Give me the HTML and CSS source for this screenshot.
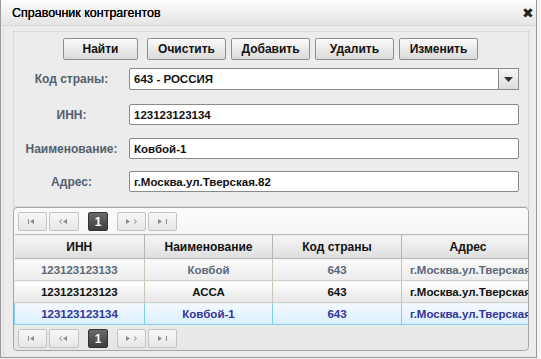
FILE: index.html
```html
<!DOCTYPE html>
<html>
<head>
<meta charset="utf-8">
<link rel="stylesheet" href="styles.css">
</head>
<body>
<div class="dialog">
  <div class="titlebar">
    <span class="title">Справочник контрагентов</span>
    <span class="close">✖</span>
  </div>
  <div class="content">
    <div class="fieldset">
      <div class="buttons">
        <button class="btn w75">Найти</button>
        <button class="btn">Очистить</button>
        <button class="btn">Добавить</button>
        <button class="btn">Удалить</button>
        <button class="btn">Изменить</button>
      </div>
      <div class="row r1">
        <div class="label">Код страны:</div>
        <div class="combo"><span class="combo-text">643 - РОССИЯ</span><span class="combo-btn"><svg width="9" height="5" viewBox="0 0 9 5"><path d="M0 0h9L4.5 5z" fill="#333"/></svg></span></div>
      </div>
      <div class="row r2">
        <div class="label">ИНН:</div>
        <div class="input">123123123134</div>
      </div>
      <div class="row r3">
        <div class="label">Наименование:</div>
        <div class="input">Ковбой-1</div>
      </div>
      <div class="row r4">
        <div class="label">Адрес:</div>
        <div class="input">г.Москва.ул.Тверская.82</div>
      </div>
    </div>
    <div class="grid">
      <div class="pager top">
        <span class="pbtn"><svg width="9" height="5" viewBox="0 0 9 5"><path d="M0 0h1v5H0zM2 2.5L6 0v5z" fill="#8a8a8a"/></svg></span>
        <span class="pbtn w30"><svg width="11" height="5" viewBox="0 0 11 5"><path d="M0 2.5L3 0v1L1.2 2.5 3 4v1zM4 2.5L8 0v5z" fill="#8a8a8a"/></svg></span>
        <span class="pnum">1</span>
        <span class="pbtn"><svg width="11" height="5" viewBox="0 0 11 5"><path d="M0 0l4 2.5L0 5zM8 0l3 2.5L8 5v-1l1.8-1.5L8 1z" fill="#8a8a8a"/></svg></span>
        <span class="pbtn"><svg width="9" height="5" viewBox="0 0 9 5"><path d="M0 0l4 2.5L0 5zM8 0h1v5H8z" fill="#8a8a8a"/></svg></span>
      </div>
      <table class="tbl">
        <colgroup><col class="c1"><col class="c2"><col class="c3"><col class="c4"></colgroup>
        <thead>
          <tr><th>ИНН</th><th>Наименование</th><th>Код страны</th><th>Адрес</th></tr>
        </thead>
        <tbody>
          <tr class="dim"><td>123123123133</td><td>Ковбой</td><td>643</td><td>г.Москва.ул.Тверская.82</td></tr>
          <tr class="norm"><td>123123123123</td><td>АССА</td><td>643</td><td>г.Москва.ул.Тверская.82</td></tr>
          <tr class="sel"><td>123123123134</td><td>Ковбой-1</td><td>643</td><td>г.Москва.ул.Тверская.82</td></tr>
        </tbody>
      </table>
      <div class="pager bottom">
        <span class="pbtn"><svg width="9" height="5" viewBox="0 0 9 5"><path d="M0 0h1v5H0zM2 2.5L6 0v5z" fill="#8a8a8a"/></svg></span>
        <span class="pbtn w30"><svg width="11" height="5" viewBox="0 0 11 5"><path d="M0 2.5L3 0v1L1.2 2.5 3 4v1zM4 2.5L8 0v5z" fill="#8a8a8a"/></svg></span>
        <span class="pnum">1</span>
        <span class="pbtn"><svg width="11" height="5" viewBox="0 0 11 5"><path d="M0 0l4 2.5L0 5zM8 0l3 2.5L8 5v-1l1.8-1.5L8 1z" fill="#8a8a8a"/></svg></span>
        <span class="pbtn"><svg width="9" height="5" viewBox="0 0 9 5"><path d="M0 0l4 2.5L0 5zM8 0h1v5H8z" fill="#8a8a8a"/></svg></span>
      </div>
    </div>
  </div>
</div>
</body>
</html>
```
FILE: styles.css
```css
* { box-sizing: border-box; }
html, body { margin: 0; padding: 0; }
body {
  background: #f4f4f4;
  font-family: "Liberation Sans", Arial, sans-serif;
  width: 541px;
  height: 359px;
  overflow: hidden;
}
.dialog {
  width: 537px;
  height: 358px;
  border: 1px solid #9a9a9a;
  border-top: none;
  background: #ececec;
  display: flex;
  flex-direction: column;
}
.titlebar {
  height: 26px;
  flex: none;
  background: linear-gradient(#fdfdfd, #e4e4e4);
  border-bottom: 1px solid #d6d6d6;
  display: flex;
  align-items: center;
  justify-content: space-between;
  padding: 0 2px 0 11px;
}
.title {
  font-size: 12.5px;
  color: #000;
  text-shadow: 0 0 0.4px #000;
}
.close {
  font-size: 14px;
  color: #222;
  line-height: 1;
}
.content {
  flex: 1;
  padding: 5px 0 0 9px;
  border-left: 1px dotted #d0d0d0;
  margin-left: 2px;
}
.fieldset {
  width: 516px;
  height: 176px;
  border: 1px dotted #c4c4c4;
  padding: 6px 0 0 49px;
}
.buttons {
  display: flex;
  gap: 5px;
}
.btn {
  width: 79px;
  height: 22px;
  border: 1px solid #8e8e8e;
  border-radius: 2px;
  background: linear-gradient(#fafafa, #dadada);
  font-family: "Liberation Sans", Arial, sans-serif;
  font-weight: bold;
  font-size: 12px;
  color: #111;
  padding: 0;
}
.btn.w75 { width: 75px; margin-right: 4px; }
.row {
  display: flex;
  align-items: center;
  margin-left: -49px;
}
.r1 { margin-top: 8px; }
.r2 { margin-top: 14px; }
.r3 { margin-top: 13px; }
.r4 { margin-top: 12px; }
.label {
  width: 115px;
  text-align: center;
  font-weight: bold;
  font-size: 12px;
  color: #52606e;
}
.combo, .input {
  width: 390px;
  height: 22px;
  background: #fff;
  border: 1px solid #8a8a8a;
  border-radius: 2px;
  display: flex;
  align-items: center;
  font-weight: bold;
  font-size: 11.5px;
  color: #111;
  padding-left: 4px;
}
.input { height: 21px; }
.combo-text { flex: 1; }
.combo-btn {
  width: 21px;
  height: 22px;
  margin-right: -1px;
  border: 1px solid #8a8a8a;
  background: linear-gradient(#f6f6f6, #dcdcdc);
  display: flex;
  align-items: center;
  justify-content: center;
}
.grid {
  width: 516px;
  height: 144px;
  border: 1px solid #a6a6a6;
  border-radius: 4px;
  overflow: hidden;
  background: linear-gradient(#fbfbfb, #e6e6e6);
}
.pager {
  height: 26px;
  display: flex;
  align-items: flex-start;
  padding: 4px 0 0 4px;
  gap: 2px;
}
.pager.bottom { height: 27px; padding-top: 4px; }
.pbtn {
  width: 29px;
  height: 19px;
  border: 1px solid #c2c2c2;
  border-radius: 2px;
  background: linear-gradient(#f8f8f8, #e6e6e6);
  display: flex;
  align-items: center;
  justify-content: center;
}
.pbtn.w30 { width: 30px; }
.pnum {
  width: 20px;
  height: 19px;
  margin: 0 7px;
  background: linear-gradient(#6a6a6a, #3e3e3e);
  border: 1px solid #333;
  border-radius: 2px;
  color: #fff;
  font-weight: bold;
  font-size: 12px;
  display: flex;
  align-items: center;
  justify-content: center;
}
.tbl {
  border-collapse: collapse;
  table-layout: fixed;
  width: 520px;
}
.c1 { width: 130px; }
.c2 { width: 128px; }
.c3 { width: 129px; }
.c4 { width: 133px; }
.tbl th, .tbl td {
  font-size: 11.5px;
  font-weight: bold;
  text-align: center;
  white-space: nowrap;
  overflow: hidden;
  padding: 0;
}
.tbl th {
  height: 24px;
  border-top: 1px solid #b8b8b8;
  border-bottom: 1px solid #b8b8b8;
  border-right: 1px solid #b4b4b4;
  background: linear-gradient(#f6f6f6, #dedede);
  color: #111;
  font-size: 12px;
}
.tbl td {
  height: 22px;
  border-right: 1px solid #cbc5b8;
  border-bottom: 1px solid #d4cfc4;
}
.tbl td:nth-child(4) { text-align: left; padding-left: 8px; }
.dim td { background: linear-gradient(#fafafa, #ececec); color: #5a6878; }
.norm td { background: linear-gradient(#ffffff, #e6e6e6); color: #111; }
.sel td {
  background: linear-gradient(#f4faff, #d9efff);
  color: #33339a;
  border-top: 1px solid #7fd0ef;
  border-bottom: 1px solid #7fd0ef;
  border-right: 1px solid #7fd0ef;
}
.sel td:first-child { border-left: 1px solid #7fd0ef; }
```
